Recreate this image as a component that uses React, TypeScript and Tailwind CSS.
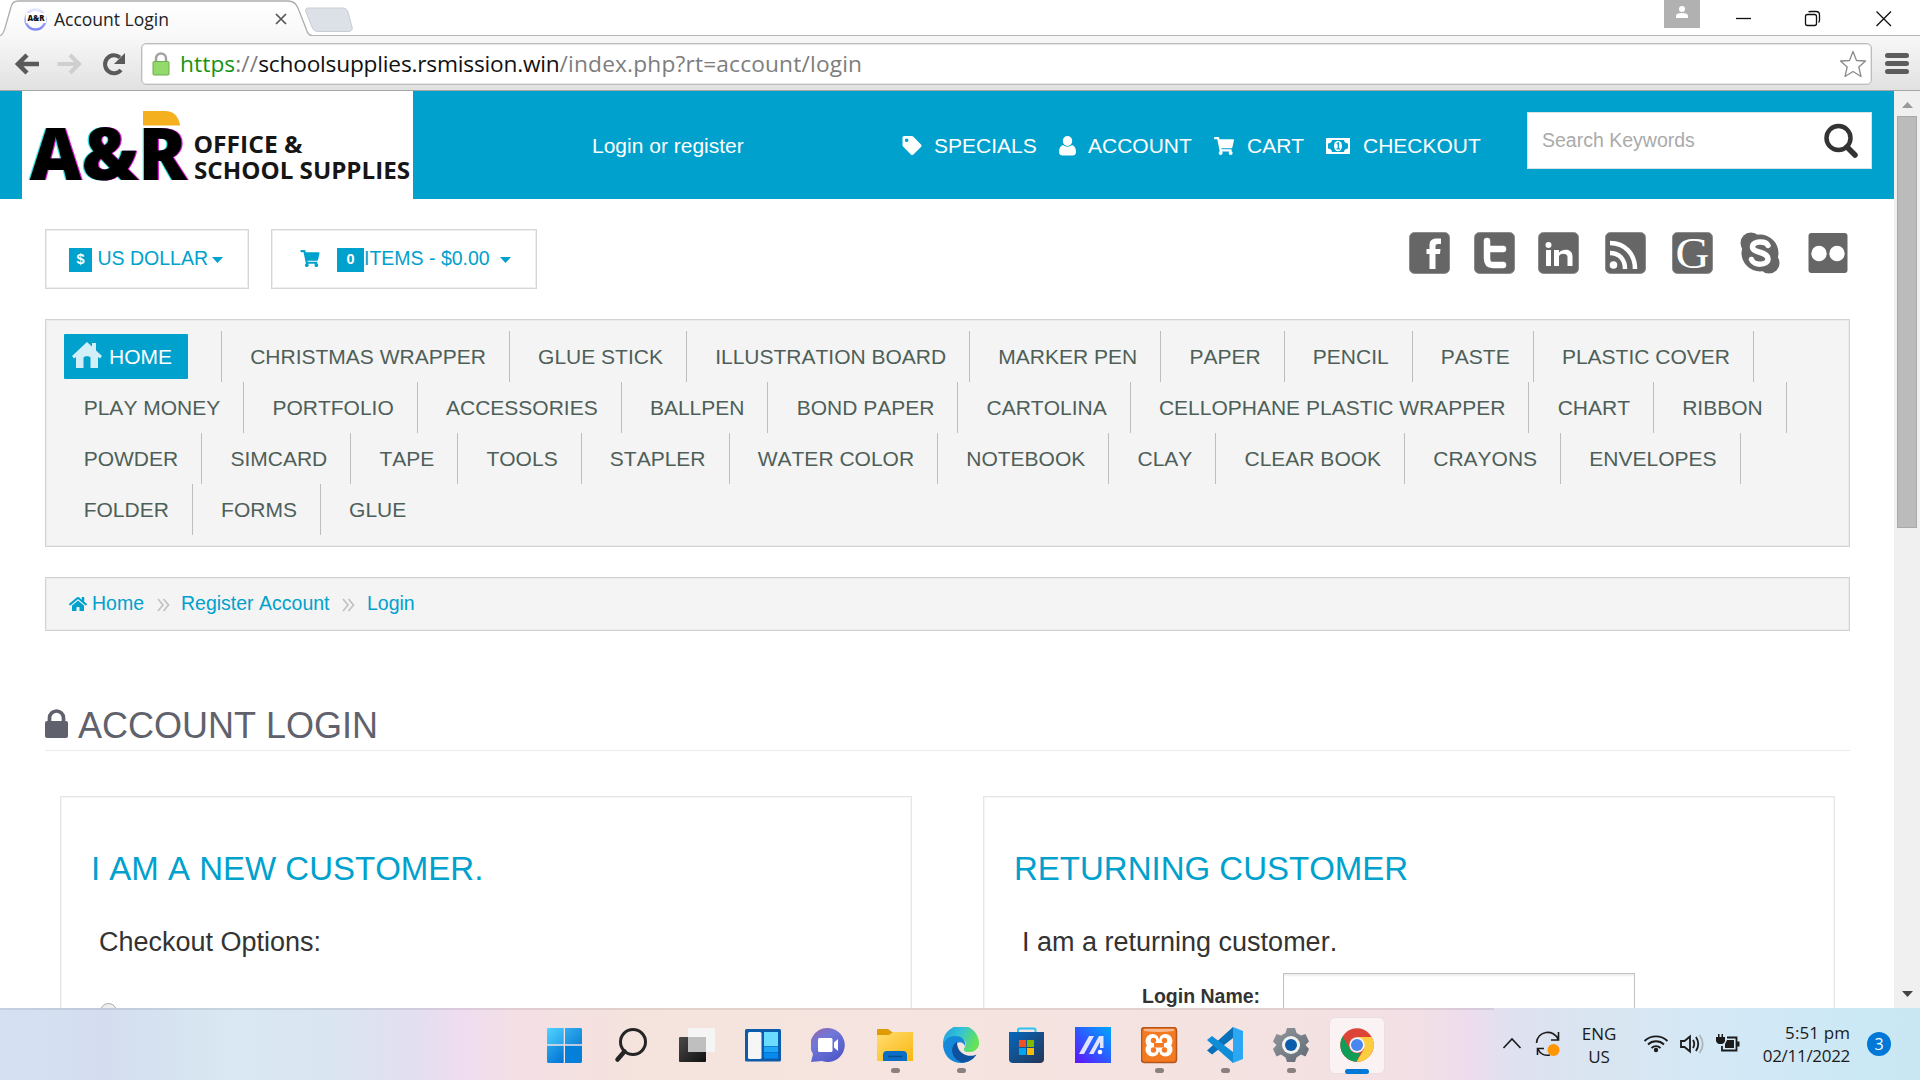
import React from "react";
import { FaShoppingCart, FaTag, FaHome, FaLock } from "react-icons/fa";

const navRows: string[][] = [
  ["CHRISTMAS WRAPPER", "GLUE STICK", "ILLUSTRATION BOARD", "MARKER PEN", "PAPER", "PENCIL", "PASTE", "PLASTIC COVER"],
  ["PLAY MONEY", "PORTFOLIO", "ACCESSORIES", "BALLPEN", "BOND PAPER", "CARTOLINA", "CELLOPHANE PLASTIC WRAPPER", "CHART", "RIBBON"],
  ["POWDER", "SIMCARD", "TAPE", "TOOLS", "STAPLER", "WATER COLOR", "NOTEBOOK", "CLAY", "CLEAR BOOK", "CRAYONS", "ENVELOPES"],
  ["FOLDER", "FORMS", "GLUE"],
];

function TabStrip() {
  return (
    <div className="flex h-9 w-full items-start bg-white font-['Open_Sans',sans-serif]">
      <div className="relative h-9 w-[360px] shrink-0">
        <svg className="absolute inset-0" width="360" height="36" viewBox="0 0 360 36">
          <defs>
            <linearGradient id="tabfill" x1="0" y1="0" x2="0" y2="1">
              <stop offset="0" stopColor="#ffffff" />
              <stop offset="1" stopColor="#f8f8f8" />
            </linearGradient>
            <linearGradient id="favring" x1="0" y1="0" x2="0" y2="1">
              <stop offset="0" stopColor="#e3e6ff" />
              <stop offset="1" stopColor="#7f86f5" />
            </linearGradient>
          </defs>
          <path d="M311 35.5H360" stroke="#b5b5b5" />
          <path d="M0 36C3 35 4 31 5 28L11 7C12 3 14 1.500 18 1.500H288C293 1.500 296 3 298 8L307 31C308 34 309 35.500 312 35.500V36Z" fill="url(#tabfill)" />
          <path d="M0 36C3 35 4 31 5 28L11 7C12 3 14 1 18 1H288C293 1 296 3 298 8L307 31C308 34 309 35.500 312 35.500" fill="none" stroke="#adadad" strokeWidth="1.300" />
          <path d="M309 8H342C345 8 347 9 348 12L352 27C353 30 351 31.500 348 31.500H318C315 31.500 313 30 312 27L306 12C305 9 306 8 309 8Z" fill="#dce0e7" stroke="#c9ccd2" />
          <circle cx="35.500" cy="19.500" r="10" fill="#fff" stroke="url(#favring)" strokeWidth="2.500" />
          <rect x="26" y="13" width="20" height="10" fill="#fff" />
          <text x="27.500" y="21" fontFamily="Open Sans" fontWeight="800" fontSize="9" textLength="17" lengthAdjust="spacingAndGlyphs" fill="#111">A&amp;R</text>
          <path d="M276 14L286 24M286 14L276 24" stroke="#555" strokeWidth="1.700" />
        </svg>
        <span className="absolute left-[54px] top-[7px] whitespace-nowrap text-[17.5px] leading-[24px] text-[#222]">Account Login</span>
      </div>
      <div className="flex h-9 grow items-start border-b border-[#b5b5b5]">
        <div className="ml-auto flex h-7 w-9 items-start justify-center bg-[#b1b1b1] pt-1.5">
          <svg width="12" height="13" viewBox="0 0 12 13" fill="#fff"><circle cx="6" cy="3" r="3" /><path d="M0 12V10C0 8 2 7 6 7S12 8 12 10V12Z" /></svg>
        </div>
        <svg className="shrink-0" width="220" height="34" viewBox="0 0 220 34" fill="none" stroke="#111" strokeWidth="1.300">
          <path d="M36 18.500H51" />
          <rect x="105.500" y="14.500" width="11" height="11" rx="2" />
          <path d="M108.500 12C109 11.500 110 11.500 111 11.500H116C118.500 11.500 119.500 13 119.500 15V20C119.500 21.500 119.500 22 118.500 22.500" />
          <path d="M176.500 11.500L191 26M191 11.500L176.500 26" />
        </svg>
      </div>
    </div>
  );
}

function Toolbar() {
  return (
    <div className="flex h-[55px] items-start border-b border-[#a6a6a6] bg-linear-to-b from-[#f8f8f8] to-[#e1e1e1] pt-[7px]">
      <svg className="shrink-0" width="141" height="42" viewBox="0 0 141 42" fill="none">
        <path d="M17.500 21H39M27 12L18 21L27 30" stroke="#5a5a5a" strokeWidth="4.500" />
        <path d="M57.500 21H79M70 12L79 21L70 30" stroke="#cfcfcf" strokeWidth="4" />
        <path d="M121 27A9 9 0 1 1 120 14.500" stroke="#5a5a5a" strokeWidth="4" />
        <path d="M125 10V21H114Z" fill="#5a5a5a" />
      </svg>
      <div className="flex h-[42px] w-[1731px] shrink-0 items-center rounded-[5px] border border-[#bdbdbd] bg-white shadow-[inset_0_0_0_1px_#e6e6e6]">
        <svg className="ml-[10px] shrink-0" width="18" height="24" viewBox="0 0 18 24">
          <path d="M4 11V6.500A5 5 0 0 1 14 6.500V11" fill="none" stroke="#a3a3a3" strokeWidth="2.500" />
          <rect x="1" y="9.500" width="16" height="13.500" rx="1" fill="#94d96b" stroke="#6fae4d" />
        </svg>
        <span className="ml-[10px] w-[1659px] shrink-0 whitespace-nowrap font-['Open_Sans',sans-serif] text-[22.7px] leading-[30px] text-[#7d7d7d]">
          <span className="tracking-[0.1px]"><span className="text-[#149414]">https</span>://</span><span className="tracking-[-0.2px] text-[#111]">schoolsupplies.rsmission.win</span><span className="tracking-[0.18px]">/index.php?rt=account/login</span>
        </span>
        <svg className="shrink-0" width="28" height="28" viewBox="0 0 28 28" fill="none" stroke="#8b8b8b" strokeWidth="1.300" strokeLinejoin="round">
          <path d="M14 1.500L17.500 10.500L26.500 11L19.800 17L22 26.500L14 21.500L6 26.500L8.200 17L1.500 11L10.500 10.500Z" />
        </svg>
      </div>
      <div className="ml-[13px] mt-[10px] flex flex-col gap-[3px]">
        <i className="h-[5px] w-6 rounded-sm bg-[#5c5c5c]" />
        <i className="h-[5px] w-6 rounded-sm bg-[#5c5c5c]" />
        <i className="h-[5px] w-6 rounded-sm bg-[#5c5c5c]" />
      </div>
    </div>
  );
}

function Logo() {
  return (
    <svg className="ml-[22px] shrink-0 bg-white" width="391" height="108" viewBox="22 91 391 108" fontFamily="Open Sans, sans-serif">
      <g fontSize="72" fontWeight="800">
        <text x="28.500" y="179.500" textLength="157" lengthAdjust="spacingAndGlyphs" fill="#2fe0e0">A&amp;R</text>
        <text x="31" y="179.500" textLength="157" lengthAdjust="spacingAndGlyphs" fill="#d81fd8">A&amp;R</text>
        <text x="29.700" y="179.500" textLength="157" lengthAdjust="spacingAndGlyphs" fill="#000">A&amp;R</text>
      </g>
      <path d="M143 111H165C174 111 179 117 180 125.500H143Z" fill="#f5b01f" />
      <g fontWeight="700" fontSize="24" fill="#161616">
        <text x="193.500" y="153" textLength="109" lengthAdjust="spacingAndGlyphs">OFFICE &amp;</text>
        <text x="194" y="179" textLength="216" lengthAdjust="spacingAndGlyphs">SCHOOL SUPPLIES</text>
      </g>
    </svg>
  );
}

function Header() {
  return (
    <header className="flex h-[108px] items-center bg-[#00a1cd] pt-px text-[21px] text-white">
      <div className="-mt-px flex shrink-0"><Logo /></div>
      <span className="ml-[179px] w-[310px] shrink-0">Login or register</span>
      <FaTag className="w-5 shrink-0 text-[19px]" />
      <span className="ml-3 w-[125px] shrink-0">SPECIALS</span>
      <svg className="shrink-0" width="17" height="20" viewBox="0 0 17 20" fill="#fff"><ellipse cx="8.500" cy="5" rx="4.700" ry="5" /><path d="M4 9C1 10 0 13 0 16C0 18.500 1.500 19.500 3.500 19.500H13.500C15.500 19.500 17 18.500 17 16C17 13 16 10 13 9C10.500 11.300 6.500 11.300 4 9Z" /></svg>
      <span className="ml-[12px] w-[126px] shrink-0">ACCOUNT</span>
      <FaShoppingCart className="w-5 shrink-0 text-[18px]" />
      <span className="ml-[13px] w-[79px] shrink-0">CART</span>
      <svg className="shrink-0" width="24" height="16" viewBox="0 0 24 16"><path fill="#fff" fillRule="evenodd" d="M0 0H24V16H0ZM6 2C6 4 4 5.500 2 5.500V10.500C4 10.500 6 12 6 14H18C18 12 20 10.500 22 10.500V5.500C20 5.500 18 4 18 2Z" /><ellipse cx="12" cy="8" rx="4" ry="5.300" fill="#fff" /><path d="M10.700 6L12.300 5V10.300M10.500 10.800H14" stroke="#00a1cd" strokeWidth="1.300" fill="none" /></svg>
      <span className="ml-[13px] w-[164px] shrink-0">CHECKOUT</span>
      <div className="mb-[10px] flex h-[57px] w-[345px] shrink-0 items-center justify-between border border-[#d8e3e6] bg-white pl-3.5 pr-[13px]">
        <span className="text-[19.5px] text-[#aaa]">Search Keywords</span>
        <svg width="34" height="35" viewBox="0 0 34 35" fill="none" stroke="#333"><circle cx="14.500" cy="15" r="12" strokeWidth="4.500" /><path d="M23 24L31 32" strokeWidth="5.500" strokeLinecap="round" /></svg>
      </div>
    </header>
  );
}

function SocialIcons() {
  const box = <rect x="0.500" y="0.500" width="40" height="41" rx="5" fill="#666" stroke="#8c8c8c" />;
  return (
    <div className="flex h-[42px] items-center">
      <svg width="41" height="42" viewBox="0 0 41 42">{box}<path d="M32 6.500V12H29C27 12 26.500 13 26.500 14.500V17H31.500L31 22H26.500V37H20.500V22H17.500V17H20.500V13.500C20.500 8.500 23 6.500 27.500 6.500Z" fill="#fff" /></svg>
      <svg className="ml-6" width="41" height="42" viewBox="0 0 41 42">{box}<path d="M13 9V26C13 31 15 33 19 33H29M13 17H29" fill="none" stroke="#fff" strokeWidth="6.500" strokeLinecap="round" /></svg>
      <svg className="ml-[23px]" width="41" height="42" viewBox="0 0 41 42">{box}<g fill="#fff"><circle cx="10.500" cy="13" r="3" /><path d="M8 18H13V34H8ZM16 18H21V20.500C25 16.500 34 16.500 34.500 24V34H29.500V25C29.500 20.500 21 20.500 21 25V34H16Z" /></g></svg>
      <svg className="ml-[26px]" width="41" height="42" viewBox="0 0 41 42">{box}<circle cx="8.500" cy="33" r="3.800" fill="#fff" /><path d="M5 21C14 21 20 27 20 37M5 11C20 11 30 22 30 37" fill="none" stroke="#fff" strokeWidth="4.500" /></svg>
      <svg className="ml-[26px] overflow-visible" width="41" height="42" viewBox="0 0 41 42">{box}<text x="3.500" y="35.500" fontFamily="Liberation Serif" fontSize="44" textLength="34" lengthAdjust="spacingAndGlyphs" fill="#fff">G</text></svg>
      <svg className="ml-[27px]" width="41" height="42" viewBox="0 0 41 42"><g fill="#666"><circle cx="20" cy="21" r="18.500" /><circle cx="11" cy="11" r="10.500" /><circle cx="29" cy="31" r="10.500" /></g><path d="M28 13.500C26 8.500 12.500 8.500 12.500 15C12.500 21.500 28 19 28 27C28 33.500 13.500 34 11.500 27.500" fill="none" stroke="#fff" strokeWidth="5.500" strokeLinecap="round" /></svg>
      <svg className="ml-[27px]" width="40" height="42" viewBox="0 0 40 42"><rect x="0.500" y="1" width="39" height="40" rx="3" fill="#666" /><circle cx="11" cy="21.500" r="7.700" fill="#fff" /><circle cx="29" cy="21.500" r="7.700" fill="#fff" /></svg>
    </div>
  );
}

function Caret() {
  return <svg className="mt-px shrink-0" width="11" height="6" viewBox="0 0 11 6"><path d="M0 0H11L5.500 6Z" fill="#00a1cd" /></svg>;
}

function UtilityRow() {
  return (
    <div className="mt-[30px] flex h-[60px] text-[19.5px] text-[#00a1cd]">
      <div className="flex w-[204px] shrink-0 items-center border border-[#d6d6d6] bg-white pl-[23px] shadow-[inset_0_0_0_1px_#eeeeee]">
        <b className="mt-0.5 flex h-6 w-[23px] items-center justify-center bg-[#00a1cd] text-[14.500px] text-white">$</b>
        <span className="ml-[5.5px] w-[114.5px] shrink-0 pb-px">US DOLLAR</span>
        <Caret />
      </div>
      <div className="ml-[22px] flex w-[266px] shrink-0 items-center border border-[#d6d6d6] bg-white pl-[28px] shadow-[inset_0_0_0_1px_#eeeeee]">
        <FaShoppingCart className="mb-0.5 w-5 shrink-0 text-[17px]" />
        <b className="ml-[17px] mt-0.5 flex h-6 w-[27px] shrink-0 items-center justify-center bg-[#00a1cd] text-[14.500px] text-white">0</b>
        <span className="w-[136px] shrink-0 whitespace-nowrap pb-px">ITEMS - $0.00</span>
        <Caret />
      </div>
      <div className="ml-auto mr-0.5 pt-[3px]"><SocialIcons /></div>
    </div>
  );
}

function NavMenu() {
  return (
    <nav className="mt-[30px] h-[228px] border border-[#d3d3d3] bg-[#f4f4f4] pt-[11px] text-[21px] text-[#4e5f59] shadow-[inset_0_0_0_1px_#ebebeb]">
      {navRows.map((row, r) => (
        <ul key={r} className="flex h-[51px]">
          {r === 0 && (
            <li className="flex w-[176px] shrink-0 items-center border-r border-[#bdbdbd] pl-[18px]">
              <span className="flex h-[45px] w-[124px] items-center rounded-[1px] bg-[#00a1cd] pl-[8px] text-white">
                <svg className="mb-[3px] shrink-0" width="30" height="26" viewBox="0 0 30 26" fill="#d2eff7"><path d="M15 0L20 4.500V1H24V8.500L30 14L28 16.500L26 15V26H18.500V16C18.500 13.500 11.500 13.500 11.500 16V26H4V15L2 16.500L0 14Z" /></svg>
                <span className="ml-[7px]">HOME</span>
              </span>
            </li>
          )}
          {row.map((label, i) => (
            <li
              key={label}
              className={
                "flex shrink-0 items-center whitespace-nowrap pr-[23px] " +
                (i === 0 && r > 0 ? "pl-[37.7px] " : "pl-[28.2px] ") +
                (label === "GLUE" ? "" : "border-r border-[#bdbdbd]")
              }
            >
              {label}
            </li>
          ))}
        </ul>
      ))}
    </nav>
  );
}

function Chevrons() {
  return <svg className="mt-0.5 shrink-0" width="13" height="14" viewBox="0 0 13 14" fill="none" stroke="#c2c2c2" strokeWidth="1.700"><path d="M1 1L6 7L1 13M6.500 1L11.500 7L6.500 13" /></svg>;
}

function Breadcrumb() {
  return (
    <div className="mt-[30px] flex h-[54px] items-center border border-[#d3d3d3] bg-[#f4f4f4] pb-px pl-[23px] text-[19.500px] text-[#00a1cd] shadow-[inset_0_0_0_1px_#ebebeb]">
      <FaHome className="w-[18px] shrink-0 text-[18px]" />
      <span className="ml-[5px] w-[65px] shrink-0">Home</span>
      <Chevrons />
      <span className="ml-[11px] w-[161px] shrink-0 whitespace-nowrap">Register Account</span>
      <Chevrons />
      <span className="ml-[12px]">Login</span>
    </div>
  );
}

function Panels() {
  return (
    <div className="mt-[45px] flex h-[212px] px-[15px] text-[#333]">
      <section className="h-[300px] w-[852px] shrink-0 border border-[#e6e6e6] pl-[30px] pt-[52px] shadow-[inset_0_0_0_1px_#f5f5f5]">
        <h2 className="text-[33px] leading-[40px] text-[#00a1cd]">I AM A NEW CUSTOMER.</h2>
        <p className="ml-2 mt-[38px] text-[27px] leading-[30px]">Checkout Options:</p>
        <div className="ml-[9px] mt-[46px] size-[17px] rounded-full border-[1.5px] border-[#a9a9a9] bg-[#eee]" />
      </section>
      <section className="ml-[71px] h-[300px] w-[852px] shrink-0 border border-[#e6e6e6] pl-[30px] pt-[52px] shadow-[inset_0_0_0_1px_#f5f5f5]">
        <h2 className="text-[33px] leading-[40px] text-[#00a1cd]">RETURNING CUSTOMER</h2>
        <p className="ml-2 mt-[38px] text-[27px] leading-[30px]">I am a returning customer.</p>
        <div className="mt-[16px] flex">
          <label className="ml-[128px] mt-[11px] w-[141px] shrink-0 text-[19.500px] font-bold leading-6">Login Name:</label>
          <div className="h-[51px] w-[352px] border border-[#c2c2c2] bg-white shadow-[inset_0_2px_2px_#eeeeee]" />
        </div>
      </section>
    </div>
  );
}

function ScrollBar() {
  return (
    <aside className="flex h-[917px] w-[26px] shrink-0 flex-col items-center bg-[#f0f0f0]">
      <svg className="mt-[11px] shrink-0" width="11" height="6" viewBox="0 0 11 6"><path d="M0 6L5.500 0L11 6Z" fill="#999" /></svg>
      <div className="mt-2 h-[412px] w-5 shrink-0 border border-[#a9a9a9] bg-[#bbb]" />
      <svg className="mb-[11px] mt-auto shrink-0" width="11" height="6" viewBox="0 0 11 6"><path d="M0 0H11L5.500 6Z" fill="#444" /></svg>
    </aside>
  );
}

const iconDefs = (
  <defs>
    <linearGradient id="winA" x1="0" y1="0" x2="1" y2="1"><stop offset="0" stopColor="#4fd2ff" /><stop offset="1" stopColor="#27a3ea" /></linearGradient>
    <linearGradient id="winB" x1="0" y1="0" x2="1" y2="1"><stop offset="0" stopColor="#31aeee" /><stop offset="1" stopColor="#0f83d8" /></linearGradient>
    <linearGradient id="winC" x1="0" y1="0" x2="1" y2="1"><stop offset="0" stopColor="#27a3ea" /><stop offset="1" stopColor="#0074d3" /></linearGradient>
    <linearGradient id="tvdark" x1="0" y1="0" x2="1" y2="1"><stop offset="0" stopColor="#4a4a4a" /><stop offset="1" stopColor="#111" /></linearGradient>
    <linearGradient id="chat" x1="0" y1="0" x2="0.700" y2="1"><stop offset="0" stopColor="#9465a9" /><stop offset="0.400" stopColor="#7078d8" /><stop offset="1" stopColor="#5058c8" /></linearGradient>
    <linearGradient id="fold" x1="0" y1="0" x2="1" y2="1"><stop offset="0" stopColor="#ffdd70" /><stop offset="1" stopColor="#fbb710" /></linearGradient>
    <linearGradient id="edgea" x1="0" y1="0" x2="1" y2="0.400"><stop offset="0" stopColor="#1f9be0" /><stop offset="0.500" stopColor="#33c3d8" /><stop offset="1" stopColor="#64e25a" /></linearGradient>
    <linearGradient id="store" x1="0" y1="0" x2="1" y2="1"><stop offset="0" stopColor="#0468be" /><stop offset="1" stopColor="#253556" /></linearGradient>
    <linearGradient id="asus" x1="0" y1="1" x2="1" y2="0"><stop offset="0" stopColor="#6212ff" /><stop offset="0.500" stopColor="#2b5cff" /><stop offset="1" stopColor="#00a8ff" /></linearGradient>
    <linearGradient id="gear" x1="0" y1="0" x2="1" y2="1"><stop offset="0" stopColor="#92979c" /><stop offset="1" stopColor="#606a74" /></linearGradient>
  </defs>
);

const taskIcons: { name: string; running?: boolean; art: React.ReactNode }[] = [
  { name: "Start", art: <><path d="M1 1H16.700V17.300H0V2Z" fill="url(#winA)" /><path d="M18 1H34L35 2V17.300H18Z" fill="url(#winB)" /><path d="M0 18.700H16.700V36H1L0 35Z" fill="url(#winC)" /><path d="M18 18.700H35V35L34 36H18Z" fill="#0580da" /></> },
  { name: "Search", art: <g fill="none" stroke="#252525"><circle cx="20" cy="15" r="12.500" strokeWidth="3" /><path d="M11.500 24.500L4.500 32.500" strokeWidth="4.500" strokeLinecap="round" /></g> },
  { name: "Task view", art: <><rect x="0" y="10" width="27" height="25" rx="1" fill="url(#tvdark)" /><rect x="9" y="1" width="27" height="24" rx="1" fill="#f5f5f5" /><path d="M9 10H27V25H10L9 24Z" fill="#bfbfbf" /></> },
  { name: "Widgets", art: <><rect x="0" y="2" width="36" height="32.500" rx="1.500" fill="#0c5cab" /><rect x="3" y="5" width="13.500" height="27" rx="1.500" fill="#f6f6f6" /><path d="M19 5H33V19H19Z" fill="#69dcff" /><path d="M19 19.500H33V25H19Z" fill="#1ea5f5" /><path d="M19 25.500H33V31.500H19Z" fill="#078af0" /></> },
  { name: "Chat", art: <><path d="M17 1A17 17 0 1 1 11 34L0 35L2 27A17 17 0 0 1 17 1Z" fill="url(#chat)" /><rect x="7" y="11" width="14.500" height="14" rx="1.500" fill="#fff" /><path d="M23 15.500L27 12V24L23 20.500Z" fill="#fff" /></> },
  { name: "Files", running: true, art: <><path d="M0 3Q0 2 1 2H11L15 5H36V12H0Z" fill="#de9b05" /><path d="M0 8H12L16 5H36V34H0Z" fill="url(#fold)" /><path d="M6 34V28Q6 24 10 24H26Q30 24 30 28V34Z" fill="#0b6ec4" /><path d="M11 29.500H25" stroke="#074c8c" strokeWidth="1.500" /></> },
  { name: "Edge", running: true, art: <><path d="M0 18A18 18 0 0 1 36 15C36.500 21 32 25 26 25C20 25 20 22 22 20C25 12 17 10 12 11C6 12 2 15 0 18Z" fill="url(#edgea)" /><path d="M0 19C1 13 6 9 12 9C19 9 23 13 22 19C21 16 17 14 14 16C9 20 12 30 22 32C26 32.500 30 31 33 28C26 40 3 40 0 19Z" fill="#1688da" /><path d="M14 15C6 19 8 32 19 35.500C25 35 31 32 33.500 27.500C27 31 14 28 14 15Z" fill="#0e519d" /></> },
  { name: "Store", art: <><path d="M9 7V3Q9 1.500 10.500 1.500H25Q26.500 1.500 26.500 3V7" fill="none" stroke="#2cc3f4" strokeWidth="2" /><path d="M0 5H35V32Q35 36 31 36H4Q0 36 0 32Z" fill="url(#store)" /><path d="M10 13H17V20H10Z" fill="#f25022" /><path d="M18 13H25V20H18Z" fill="#7fba00" /><path d="M10 21H17V28H10Z" fill="#00a4ef" /><path d="M18 21H25V28H18Z" fill="#ffb900" /></> },
  { name: "MyASUS", art: <><rect width="36" height="36" fill="url(#asus)" /><path d="M4 27L14 9H19L9 27ZM14 27L24 9H28.500V21H25V15L18.500 27Z" fill="#dfe4ff" /><circle cx="25" cy="25" r="2.300" fill="#fff" /></> },
  { name: "XAMPP", running: true, art: <><rect x="0.500" y="0.500" width="35" height="35" rx="3" fill="#f37a20" stroke="#b4561b" strokeWidth="1.500" /><path d="M3 2H33V4Q18 6 3 4Z" fill="#f7b68d" /><g fill="#fff"><circle cx="11.500" cy="14" r="7" /><circle cx="24.500" cy="14" r="7" /><circle cx="11.500" cy="22.500" r="7" /><circle cx="24.500" cy="22.500" r="7" /><path d="M11 12H25V25H11Z" /></g><g fill="#f37a20"><circle cx="12.500" cy="13.500" r="2.700" /><circle cx="23.500" cy="13.500" r="2.700" /><circle cx="12.500" cy="23" r="2.700" /><circle cx="23.500" cy="23" r="2.700" /><path d="M13 16H23V20.500H13ZM16.500 7H19.500L18 13ZM16.500 29.500H19.500L18 24Z" /></g></> },
  { name: "VS Code", running: true, art: <><path d="M26 0V11L5 27.500L0 23.500Z" fill="#0871b7" /><path d="M26 36V25L5 9L0 13Z" fill="#108dd8" /><path d="M26 0L36 4V32L26 36Z" fill="#2ba7f3" /></> },
  { name: "Settings", running: true, art: <><path d="M14 1H22L23.500 6L28 8.500L32.500 7L36 14.500L32.500 18L36 22L32.500 29.500L28 27.500L23.500 30.500L22 35H14L12.500 30.500L8 27.500L3.500 29.500L0 22L3.500 18L0 14.500L3.500 7L8 8.500L12.500 6Z" fill="url(#gear)" /><circle cx="18" cy="18" r="9" fill="#f2f2f2" /><circle cx="18" cy="18" r="6" fill="#0b5cab" /></> },
];

function ChromeIcon() {
  return (
    <svg className="shrink-0" width="34" height="34" viewBox="0 0 34 34">
      <circle cx="17" cy="17" r="16.700" fill="#db4437" />
      <path d="M17 9H31.700A16.700 16.700 0 0 1 16.500 33.700L24 21Z" fill="#fdcd40" />
      <path d="M2.600 8.500L10 21C12 25 17 26 20.500 24.500L16.500 33.700A16.700 16.700 0 0 1 2.600 8.500Z" fill="#0f9d58" />
      <circle cx="17" cy="17" r="7.700" fill="#f5f5f5" /><circle cx="17" cy="17" r="6" fill="#4a86f0" />
    </svg>
  );
}

function Taskbar() {
  return (
    <footer className="flex h-[72px] bg-[linear-gradient(90deg,#d5e1f2_0px,#d3ddef_108px,#d9e8f2_235px,#dae5f2_325px,#e2dff0_410px,#efdcf0_462px,#f3dfe4_520px,#f5e3dd_640px,#f6e4e0_900px,#f4e2e2_1300px,#f1dfe6_1430px,#eedcee_1465px,#dfe1f0_1510px,#d9e5f0_1590px,#d5e8f6_1710px,#cbe8f5_1870px,#c9e7f2_1920px)] font-['Open_Sans',sans-serif] text-[#1b1b1b]">
      <div className="flex w-[1494px] shrink-0 border-t-2 border-black/8 pl-[547px]">
        {taskIcons.map((t) => (
          <div key={t.name} className="flex w-[66px] shrink-0 flex-col pt-[17px]">
            <svg width="37" height="37" viewBox="0 0 37 37">{t.name === "Start" && iconDefs}{t.art}</svg>
            {t.running && <i className="ml-[14px] mt-1 h-[5px] w-[9px] rounded-full bg-[#8b8080]" />}
          </div>
        ))}
        <div className="-ml-[10px] mt-[7px] flex h-[57px] w-14 shrink-0 flex-col items-center rounded-md border border-[#ecdede] bg-[#faf2f3] pt-[10px]">
          <ChromeIcon />
          <i className="mt-[7px] h-[5px] w-6 shrink-0 rounded-full bg-[#0078d7]" />
        </div>
      </div>
      <svg className="ml-2 mt-[20px] shrink-0" width="62" height="32" viewBox="1502 1028 62 32" fill="none" stroke="#1b1b1b" strokeWidth="1.600">
        <path d="M1503.500 1048L1512 1039L1520.500 1048" />
        <path d="M1536.500 1043C1537 1031 1554 1028 1558.500 1040M1558.500 1032V1040H1551M1537.500 1055V1048.500H1544M1538 1049C1540 1054 1545 1056 1550 1055" />
        <circle cx="1553.500" cy="1050" r="6" fill="#ff9500" stroke="none" />
      </svg>
      <div className="mt-[14px] flex w-[70px] shrink-0 flex-col items-center text-[17px] leading-[23px]"><span>ENG</span><span>US</span></div>
      <svg className="ml-[8px] mt-[24px] shrink-0" width="100" height="24" viewBox="1642 1032 100 24" fill="none" stroke="#1b1b1b" strokeWidth="1.800">
        <path d="M1644.500 1041A16.500 16.500 0 0 1 1667.500 1041M1648 1044.500A11.500 11.500 0 0 1 1664 1044.500M1651.500 1048A6.500 6.500 0 0 1 1660.500 1048" />
        <circle cx="1656" cy="1050" r="2.200" fill="#1b1b1b" stroke="none" />
        <path d="M1681 1041H1684.500L1690 1036.500V1051.500L1684.500 1047H1681Z" />
        <path d="M1693 1040Q1695.500 1044 1693 1048M1696 1037Q1700.500 1044 1696 1051" />
        <path d="M1699.500 1035Q1706 1044 1699.500 1053" stroke="#aab6bd" />
        <path d="M1727 1037.500H1736.500V1050.500H1722V1046" /><path d="M1727 1040H1734V1048H1725V1044ZM1737 1041.500H1739.500V1046.500H1737ZM1716 1037H1725V1041Q1724 1044 1721.500 1044H1719.500Q1717 1044 1716 1041ZM1718 1034H1719.500V1037H1718ZM1721.500 1034H1723V1037H1721.500Z" fill="#1b1b1b" stroke="none" />
      </svg>
      <div className="mt-[13px] flex w-[108px] shrink-0 flex-col items-end text-[17px] leading-[23px]"><span className="tracking-[0.1px]">5:51 pm</span><span className="tracking-[-0.3px]">02/11/2022</span></div>
      <div className="ml-[17px] mt-[24px] flex size-6 shrink-0 items-center justify-center rounded-full bg-[#0078d7] text-[16px] text-white">3</div>
    </footer>
  );
}

export default function App() {
  return (
    <div className="flex h-[1080px] w-[1920px] flex-col overflow-hidden bg-white font-['Liberation_Sans',Arial,sans-serif] [font-kerning:none]">
      <TabStrip />
      <Toolbar />
      <div className="flex h-[917px] overflow-hidden">
        <main className="w-[1894px] shrink-0">
          <Header />
          <div className="pl-[45px] pr-[44px]">
            <UtilityRow />
            <NavMenu />
            <Breadcrumb />
            <h1 className="mt-[74px] flex h-[46px] items-start border-b-[1.5px] border-[#ececec] pt-px text-[36px] leading-[40px] text-[#5f626c]">
              <svg className="mt-[3px] shrink-0" width="23" height="29" viewBox="0 0 23 29"><path d="M4.500 13V9A7 7 0 0 1 18.500 9V13" fill="none" stroke="#5f626c" strokeWidth="3.700" /><rect x="0" y="12" width="23" height="17" rx="2" fill="#5f626c" /></svg>
              <span className="ml-[10px]">ACCOUNT LOGIN</span>
            </h1>
            <Panels />
          </div>
        </main>
        <ScrollBar />
      </div>
      <Taskbar />
    </div>
  );
}
